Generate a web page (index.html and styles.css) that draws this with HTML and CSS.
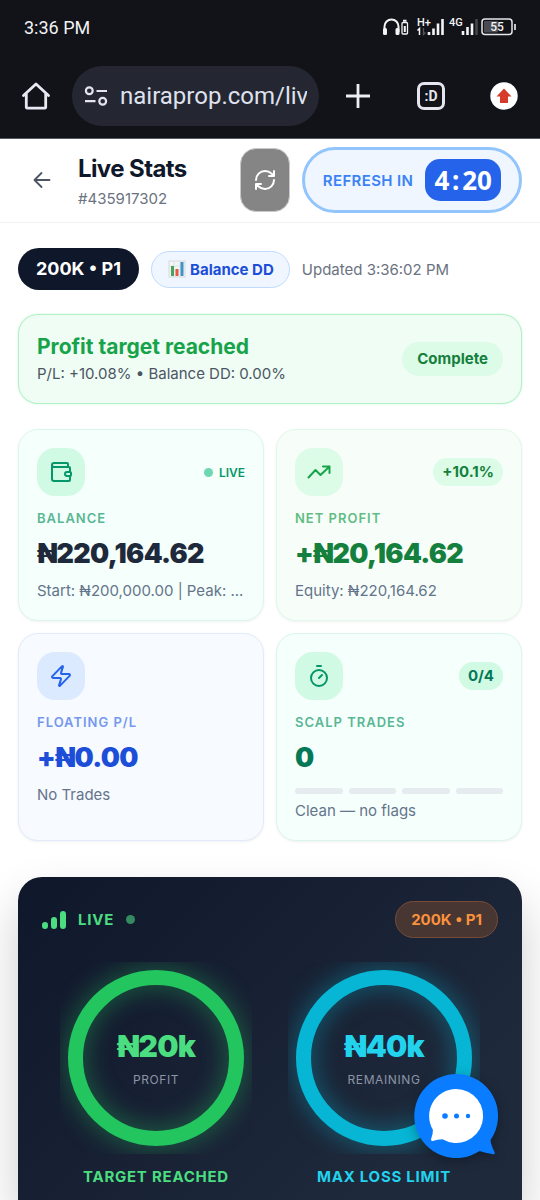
FILE: index.html
```html
<!DOCTYPE html>
<html lang="en">
<head>
<meta charset="utf-8">
<meta name="viewport" content="width=device-width, initial-scale=1">
<title>Live Stats</title>
<link rel="stylesheet" href="styles.css">
</head>
<body>
<div class="screen">
  <div class="chrome">
    <div class="status">
      <span class="clock">3:36 PM</span>
      <svg class="status-icons" width="134" height="20" viewBox="0 0 134 20" aria-label="Device status">
        <path d="M2.500 15V9.500a7 7 0 0 1 14 0V15" fill="none" stroke="#f4f4f6" stroke-width="2"/>
        <rect x="1" y="11" width="4" height="7" rx="1.500" fill="#f4f4f6"/>
        <rect x="13.500" y="11" width="4" height="7" rx="1.500" fill="#f4f4f6"/>
        <rect x="20" y="5.500" width="5.500" height="11.500" rx="1" fill="none" stroke="#f4f4f6" stroke-width="1.300"/>
        <path d="M21 3.800h3.500M22.800 9v6" stroke="#f4f4f6" stroke-width="2"/>
        <text x="35" y="9" class="net">H+</text>
        <path d="M35.500 13.500l2-2V18" fill="none" stroke="#f4f4f6" stroke-width="1.500"/>
        <path d="M41.500 11v6.500l2-2" fill="none" stroke="#55565c" stroke-width="1.300"/>
        <path d="M47 15v3M51.500 11.500V18M56 6.500V18M60.500 2v16" stroke="#f4f4f6" stroke-width="2.600"/>
        <text x="67" y="9" class="net">4G</text>
        <path d="M81 14v4M85.500 10v8M90 6.500V18" stroke="#f4f4f6" stroke-width="2.600"/>
        <path d="M94.500 2v16" stroke="#44454b" stroke-width="2.600"/>
        <rect x="100" y="2" width="30" height="15.500" rx="3" fill="none" stroke="#e6e6ea" stroke-width="1.500"/>
        <rect x="102" y="4" width="14" height="11.500" rx="1" fill="#4a4b50"/>
        <path d="M133 7v6" stroke="#e6e6ea" stroke-width="1.700"/>
        <text x="115" y="14" text-anchor="middle" class="charge">55</text>
      </svg>
    </div>
    <nav class="toolbar" aria-label="Browser">
      <button class="tool" aria-label="Home">
        <svg width="30" height="30" viewBox="0 0 30 30" fill="none" stroke="#e8e9f2" stroke-width="2.800" stroke-linejoin="round" stroke-linecap="round"><path d="M2.500 14.500L15 3l12.500 11.500M5.300 13v13.200q0 1 1 1h17.400q1 0 1-1V13"/></svg>
      </button>
      <div class="address">
        <svg class="tune" width="24" height="20" viewBox="0 0 24 20" fill="none" stroke="#e3e4ee" stroke-width="2.200"><circle cx="5.300" cy="4.700" r="3.400"/><path d="M12.500 5H23M1 15.200h10.500"/><circle cx="18.700" cy="15.200" r="3.400"/></svg>
        <input class="url" type="text" value="nairaprop.com/live" aria-label="Address">
      </div>
      <div class="actions">
        <button class="tool" aria-label="New tab">
          <svg width="26" height="26" viewBox="0 0 26 26" stroke="#ecedf5" stroke-width="2.800"><path d="M13 1v24M1 13h24"/></svg>
        </button>
        <button class="tool tabs" aria-label="Tabs">:D</button>
        <button class="tool" aria-label="Update available">
          <svg width="28" height="28" viewBox="0 0 28 28"><circle cx="14" cy="14" r="13.700" fill="#fff"/><path d="M14 6.500l7.500 8H18V21h-8v-6.500H6.500z" fill="#d63a2b"/></svg>
        </button>
      </div>
    </nav>
  </div>

  <header class="header">
    <button class="back" aria-label="Back">
      <svg width="24" height="24" viewBox="0 0 24 24" fill="none" stroke="#4b5563" stroke-width="1.800" stroke-linecap="round" stroke-linejoin="round"><path d="M19.500 12H4.500M11.500 19l-7-7 7-7"/></svg>
    </button>
    <div class="heading">
      <h1>Live Stats</h1>
      <p>#435917302</p>
    </div>
    <button class="reload" aria-label="Refresh">
      <svg width="24" height="24" viewBox="0 0 24 24" fill="none" stroke="#fff" stroke-width="2" stroke-linecap="round" stroke-linejoin="round"><path d="M3 12a9 9 0 0 1 9-9 9.750 9.750 0 0 1 6.740 2.740L21 8M21 3v5h-5M21 12a9 9 0 0 1-9 9 9.750 9.750 0 0 1-6.740-2.740L3 16M8 16H3v5"/></svg>
    </button>
    <div class="countdown">
      <span>REFRESH IN</span>
      <time class="timer">4<i>:</i>20</time>
    </div>
  </header>

  <main class="content">
    <div class="meta">
      <span class="plan">200K • P1</span>
      <span class="mode">
        <svg width="18" height="18" viewBox="0 0 18 18"><rect x="1" y="1" width="16" height="16" fill="#f3f5f6" stroke="#d5dadd"/><path d="M1 6h16M1 11h16M6 1v16M12 1v16" stroke="#dfe3e5"/><rect x="3" y="6" width="3" height="10" fill="#48a35b"/><rect x="7.500" y="9" width="3" height="7" fill="#e25a45"/><rect x="12.500" y="2" width="3" height="14" fill="#3f93c8"/></svg>
        Balance DD
      </span>
      <span class="updated">Updated 3:36:02 PM</span>
    </div>

    <section class="notice">
      <div>
        <h2>Profit target reached</h2>
        <p>P/L: +10.08% • Balance DD: 0.00%</p>
      </div>
      <span class="chip chip-lg green">Complete</span>
    </section>

    <div class="cards">
      <section class="card emerald">
        <div class="card-top">
          <span class="tile"><svg width="24" height="24" viewBox="0 0 24 24"><path d="M19 7V4a1 1 0 0 0-1-1H5a2 2 0 0 0 0 4h15a1 1 0 0 1 1 1v4h-3a2 2 0 0 0 0 4h3a1 1 0 0 0 1-1v-2a1 1 0 0 0-1-1M3 5v14a2 2 0 0 0 2 2h15a1 1 0 0 0 1-1v-4"/></svg></span>
          <span class="live">LIVE</span>
        </div>
        <h3>BALANCE</h3>
        <p class="value">₦220,164.62</p>
        <p class="note">Start: ₦200,000.00 | Peak: ...</p>
      </section>
      <section class="card lime">
        <div class="card-top">
          <span class="tile"><svg width="24" height="24" viewBox="0 0 24 24"><path d="M1.500 17.500l7-7.500 5 5L22.500 6.500M16 6.500h6.500V13"/></svg></span>
          <span class="chip green">+10.1%</span>
        </div>
        <h3>NET PROFIT</h3>
        <p class="value">+₦20,164.62</p>
        <p class="note">Equity: ₦220,164.62</p>
      </section>
      <section class="card blue">
        <div class="card-top">
          <span class="tile"><svg width="24" height="24" viewBox="0 0 24 24"><path d="M4 14a1 1 0 0 1-.780-1.630l9.900-10.200a.5.5 0 0 1 .860.460l-1.920 6.020A1 1 0 0 0 13 10h7a1 1 0 0 1 .780 1.630l-9.900 10.200a.5.5 0 0 1-.860-.460l1.920-6.020A1 1 0 0 0 11 14z"/></svg></span>
        </div>
        <h3>FLOATING P/L</h3>
        <p class="value">+₦0.00</p>
        <p class="note">No Trades</p>
      </section>
      <section class="card emerald scalp">
        <div class="card-top">
          <span class="tile"><svg width="24" height="24" viewBox="0 0 24 24"><path d="M10 2h4M12 14l3-3"/><circle cx="12" cy="14" r="8"/></svg></span>
          <span class="chip mint">0/4</span>
        </div>
        <h3>SCALP TRADES</h3>
        <p class="value">0</p>
        <div class="steps"><i></i><i></i><i></i><i></i></div>
        <p class="note">Clean — no flags</p>
      </section>
    </div>

    <section class="gauges">
      <div class="gauges-top">
        <span class="signal">
          <svg width="24" height="18" viewBox="0 0 24 18" stroke="#4ade80" stroke-width="6" stroke-linecap="round"><path d="M3 14v1M12 9v6M21 3v12"/></svg>
          LIVE
        </span>
        <span class="badge">200K • P1</span>
      </div>
      <div class="rings">
        <div class="ring profit">
          <div class="dial">
            <svg viewBox="0 0 192 192"><circle cx="96" cy="96" r="80.500"/></svg>
            <div class="reading"><strong>₦20k</strong><span>PROFIT</span></div>
          </div>
          <p>TARGET REACHED</p>
        </div>
        <div class="ring loss">
          <div class="dial">
            <svg viewBox="0 0 192 192"><circle cx="96" cy="96" r="80.500"/></svg>
            <div class="reading"><strong>₦40k</strong><span>REMAINING</span></div>
          </div>
          <p>MAX LOSS LIMIT</p>
        </div>
      </div>
    </section>
  </main>

  <button class="chat" aria-label="Open chat">
    <svg width="84" height="84" viewBox="0 0 84 84">
      <path d="M42 0A42 42 0 0 1 76.500 66q.5 5 4 12 1 2.500-1.500 2.200Q71 79 65.500 77A42 42 0 1 1 42 0z" fill="#0a7cff"/>
      <path d="M42 15a27 27 0 1 1-13.500 50.300q-5 0-9.800 1.600-2 .4-1.600-1.900 2-4.500 1.800-9.200A27 27 0 0 1 42 15z" fill="#fff"/>
      <circle cx="31" cy="42" r="2.800" fill="#0a7cff"/><circle cx="42.500" cy="42" r="2.500" fill="#0a7cff"/><circle cx="54" cy="42" r="2.200" fill="#0a7cff"/>
    </svg>
  </button>
</div>
</body>
</html>
```
FILE: styles.css
```css
* {
  box-sizing: border-box;
}

body {
  margin: 0;
  background: #fff;
  color: #0f172a;
  font-family: Inter, "Liberation Sans", sans-serif;
}

h1, h2, h3, p {
  margin: 0;
}

button {
  padding: 0;
  border: 0;
  background: none;
  font: inherit;
}

svg {
  display: block;
  flex: none;
}

.screen {
  display: flex;
  flex-direction: column;
  min-height: 100vh;
}

/* Browser chrome */
.chrome {
  background: #111318;
  border-bottom: 1px solid #55565b;
  font-family: Roboto, sans-serif;
}

.status {
  display: flex;
  align-items: center;
  justify-content: space-between;
  height: 54px;
  padding: 0 24px;
}

.clock {
  color: #f2f2f5;
  font-size: 18px;
}

.net {
  fill: #f4f4f6;
  font: 500 11px Roboto, sans-serif;
}

.charge {
  fill: #f4f4f6;
  font: 500 12px Roboto, sans-serif;
}

.toolbar {
  display: flex;
  align-items: center;
  gap: 21px;
  padding: 12px 21px;
}

.tool {
  display: grid;
  place-items: center;
  flex: none;
  width: 30px;
  height: 30px;
}

.address {
  display: flex;
  flex: 1;
  align-items: center;
  gap: 12px;
  min-width: 0;
  height: 60px;
  padding: 0 12px;
  border-radius: 30px;
  background: #242731;
}

.url {
  flex: 1;
  min-width: 0;
  padding: 0;
  border: 0;
  background: none;
  color: #dfe1ee;
  font: 24px Roboto, sans-serif;
}

.actions {
  display: flex;
  align-items: center;
  gap: 44px;
  padding-left: 3px;
}

.tabs {
  width: 28px;
  height: 28px;
  border: 3px solid #e4e5ef;
  border-radius: 7px;
  color: #e4e5ef;
  font-size: 14px;
  font-weight: 700;
}

/* Page header */
.header {
  display: flex;
  align-items: center;
  gap: 12px;
  padding: 8px 18px 9px;
  border-bottom: 1px solid #f0f1f3;
}

.back {
  display: grid;
  place-items: center;
  width: 48px;
  height: 48px;
}

.heading {
  flex: 1;
}

.heading h1 {
  margin-top: 3px;
  font-size: 24px;
  font-weight: 700;
  line-height: 32px;
  letter-spacing: -0.025em;
}

.heading p {
  margin-top: 2px;
  color: #6b7280;
  font-size: 15px;
  line-height: 24px;
}

.reload {
  display: grid;
  place-items: center;
  width: 50px;
  height: 64px;
  border: 1px solid #c9c9c9;
  border-radius: 16px;
  background: #858585;
}

.countdown {
  display: flex;
  align-items: center;
  gap: 12px;
  height: 66px;
  padding: 0 18px;
  border: 3px solid #93c5fd;
  border-radius: 33px;
  background: #eff6ff;
  color: #3b82f6;
  font-size: 15px;
  font-weight: 600;
  letter-spacing: 0.025em;
  white-space: nowrap;
}

.timer {
  padding: 0 9px;
  border-radius: 15px;
  background: #2563eb;
  color: #fff;
  font: 700 26px/42px "Noto Sans", sans-serif;
  letter-spacing: 0;
}

.timer i {
  display: inline-block;
  width: 13px;
  font-style: normal;
  text-align: center;
}

/* Content */
.content {
  display: flex;
  flex: 1;
  flex-direction: column;
  padding: 25px 18px 0;
}

.meta {
  display: flex;
  align-items: center;
  gap: 12px;
  white-space: nowrap;
}

.plan {
  padding: 0 18px;
  border-radius: 21px;
  background: #0f172a;
  color: #fff;
  font-size: 18px;
  font-weight: 700;
  line-height: 42px;
}

.mode {
  display: flex;
  align-items: center;
  gap: 4px;
  padding: 0 15px 0 16px;
  border: 1px solid #bfdbfe;
  border-radius: 19px;
  background: #eff6ff;
  color: #1d4ed8;
  font-size: 15px;
  font-weight: 700;
  line-height: 35px;
}

.updated {
  color: #6b7280;
  font-size: 15px;
}

.notice {
  display: flex;
  align-items: center;
  justify-content: space-between;
  margin-top: 24px;
  padding: 17px 18px;
  border: 1px solid #b3f0c8;
  border-radius: 20px;
  background: #f0fdf4;
  box-shadow: 0 0 2px #bbf7d0;
}

.notice h2 {
  color: #16a34a;
  font-size: 21px;
  font-weight: 700;
  line-height: 30px;
}

.notice p {
  color: #4b5563;
  font-size: 15px;
  line-height: 24px;
}

.chip {
  padding: 0 9px;
  border-radius: 18px;
  font-size: 15px;
  font-weight: 700;
  line-height: 28px;
}

.chip-lg {
  padding: 0 15px;
  line-height: 34px;
}

.green {
  background: #dcfce7;
  color: #15803d;
}

.mint {
  background: #d1fae5;
  color: #047857;
}

.cards {
  display: grid;
  grid-template-columns: 1fr 1fr;
  gap: 12px;
  margin-top: 25px;
}

.card {
  min-width: 0;
  padding: 18px;
  border: 1px solid var(--line);
  border-radius: 20px;
  background: var(--fill);
  box-shadow: 0 1px 3px rgb(0 0 0 / 6%);
}

.emerald {
  --line: #dbf7eb;
  --fill: #f5fffb;
  --tile: #d1fae5;
  --accent: #059669;
  --label: #5ab795;
}

.lime {
  --line: #e1f9ea;
  --fill: #f7fefa;
  --tile: #dcfce7;
  --accent: #16a34a;
  --label: #62bd82;
}

.blue {
  --line: #e1ebfb;
  --fill: #f7faff;
  --tile: #dbeafe;
  --accent: #2563eb;
  --label: #7598ee;
}

.card-top {
  display: flex;
  align-items: center;
  justify-content: space-between;
}

.tile {
  display: grid;
  place-items: center;
  width: 48px;
  height: 48px;
  border-radius: 18px;
  background: var(--tile);
}

.tile svg {
  fill: none;
  stroke: var(--accent);
  stroke-width: 2;
  stroke-linecap: round;
  stroke-linejoin: round;
}

.live {
  display: flex;
  align-items: center;
  gap: 6px;
  color: #059669;
  font-size: 12px;
  font-weight: 600;
}

.live::before {
  width: 9px;
  height: 9px;
  border-radius: 50%;
  background: #6fd7b0;
  content: "";
}

.card h3 {
  margin-top: 12px;
  color: var(--label);
  font-size: 13px;
  font-weight: 600;
  line-height: 20px;
  letter-spacing: 1px;
}

.value {
  margin-top: 8px;
  font-size: 27px;
  font-weight: 900;
  line-height: 36px;
  letter-spacing: -0.025em;
}

.card .value {
  color: #1e293b;
}

.lime .value {
  color: #15803d;
}

.blue .value {
  color: #1d4ed8;
}

.scalp .value {
  color: #047857;
}

.note {
  margin-top: 7px;
  color: #64748b;
  font-size: 15px;
  line-height: 23px;
  white-space: nowrap;
}

.scalp .note {
  margin-top: 5px;
}

.steps {
  display: grid;
  grid-template-columns: repeat(4, 1fr);
  gap: 6px;
  margin-top: 12px;
}

.steps i {
  height: 6px;
  border-radius: 3px;
  background: #e5ebef;
}

/* Gauges */
.gauges {
  flex: 1;
  margin-top: 36px;
  padding: 24px 24px 12px;
  border-radius: 24px 24px 0 0;
  background: linear-gradient(135deg, #0f172a, #1e293b 80%);
  box-shadow: 0 24px 48px rgb(0 0 0 / 20%);
}

.gauges-top {
  display: flex;
  align-items: center;
  justify-content: space-between;
}

.signal {
  display: flex;
  align-items: center;
  gap: 12px;
  color: #4ade80;
  font-size: 15px;
  font-weight: 700;
  letter-spacing: 0.05em;
}

.signal::after {
  width: 9px;
  height: 9px;
  border-radius: 50%;
  background: #348b60;
  content: "";
}

.badge {
  padding: 0 15px;
  border: 1px solid #784b36;
  border-radius: 19px;
  background: #483632;
  color: #fb923c;
  font-size: 15px;
  font-weight: 700;
  line-height: 35px;
}

.rings {
  display: grid;
  grid-template-columns: 1fr 1fr;
  margin-top: 24px;
}

.ring {
  color: var(--text);
  text-align: center;
}

.profit {
  --text: #4ade80;
  --stroke: #22c55e;
  --glow: rgb(34 197 94 / 50%);
}

.loss {
  --text: #22d3ee;
  --stroke: #06b6d4;
  --glow: rgb(6 182 212 / 50%);
}

.dial {
  display: grid;
  place-items: center;
}

.dial > * {
  grid-area: 1 / 1;
}

.dial svg {
  width: 192px;
  height: 192px;
}

.dial circle {
  fill: none;
  stroke: var(--stroke);
  stroke-width: 15;
  filter: drop-shadow(0 0 12px var(--glow));
}

.reading strong {
  display: block;
  font-size: 30px;
  font-weight: 900;
  line-height: 36px;
  letter-spacing: -0.025em;
}

.reading span {
  display: block;
  margin-top: 7px;
  color: #8d95a5;
  font-size: 12px;
  line-height: 18px;
  letter-spacing: 0.05em;
}

.ring p {
  margin-top: 12px;
  font-size: 15px;
  font-weight: 700;
  line-height: 22px;
  letter-spacing: 0.05em;
}

.chat {
  position: fixed;
  right: 42px;
  bottom: 42px;
  border-radius: 50%;
  filter: drop-shadow(0 3px 6px rgb(0 0 0 / 30%));
}
```
